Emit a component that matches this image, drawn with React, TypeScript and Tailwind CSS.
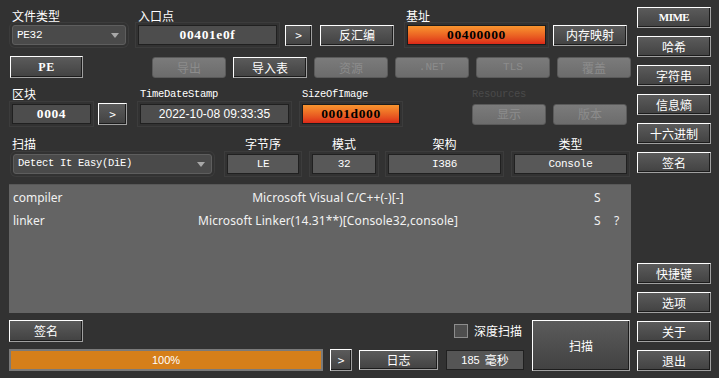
import React from 'react';

const cjk = "font-['Noto_Sans_CJK_SC',sans-serif]";
const mono = "font-['Liberation_Mono','Noto_Sans_CJK_SC',monospace]";
const bold = "font-['Liberation_Serif',serif] font-bold text-[13.5px] tracking-[0.6px]";

type Kids = { children?: React.ReactNode; className?: string };

const Label: React.FC<Kids> = ({ children, className = '' }) => (
  <div className={`text-[12px] leading-[16px] text-white ${cjk} ${className}`}>{children}</div>
);

const MonoLabel: React.FC<Kids> = ({ children, className = '' }) => (
  <div className={`h-[19px] pt-[1px] text-[10.5px] leading-[16px] tracking-[-0.3px] ${mono} ${className}`}>{children}</div>
);

const Btn: React.FC<Kids> = ({ children, className = '' }) => (
  <div
    className={`flex items-center justify-center border border-t-white border-l-white border-r-[#a0a0a0] border-b-[#a0a0a0] bg-linear-to-b from-[#5b5b5b] to-[#424242] text-white shadow-[inset_-1px_-1px_0_#1c1c1c] ${className}`}
  >
    {children}
  </div>
);

const CBtn: React.FC<Kids> = ({ children, className = '' }) => (
  <Btn className={`text-[12px] ${cjk} ${className}`}>{children}</Btn>
);

const DisBtn: React.FC<Kids> = ({ children, className = '' }) => (
  <div
    className={`flex items-center justify-center rounded-[3px] border border-[#5a5a5a] bg-linear-to-b from-[#7b7b7b] to-[#6c6c6c] text-[#8c8c8c] ${className}`}
  >
    {children}
  </div>
);

const Field: React.FC<Kids> = ({ children, className = '' }) => (
  <div
    className={`flex items-center justify-center border border-[#202020] bg-[#4d4d4d] text-white shadow-[0_0_0_2px_#323232,0_0_0_3px_#3c3c3c] ${className}`}
  >
    {children}
  </div>
);

const HotField: React.FC<Kids> = ({ children, className = '' }) => (
  <div
    className={`flex items-center justify-center border border-[#1c1c1c] bg-linear-to-b from-[#f8942f] to-[#dc2719] text-black shadow-[0_0_0_2px_#323232,0_0_0_3px_#3c3c3c] ${bold} ${className}`}
  >
    {children}
  </div>
);

const Combo: React.FC<Kids> = ({ children, className = '' }) => (
  <div
    className={`flex items-center justify-between rounded-[3px] border border-[#5e5e5e] bg-[#4a4a4a] pl-[4px] pr-[6px] tracking-[-0.3px] text-white shadow-[0_0_0_2px_#323232,0_0_0_3px_#3c3c3c] ${mono} ${className}`}
  >
    <span>{children}</span>
    <svg width="8" height="5" viewBox="0 0 8 5">
      <path d="M0 0h8L4 5z" fill="#a8a8a8" />
    </svg>
  </div>
);

const results = [
  { name: 'compiler', value: 'Microsoft Visual C/C++(-)[-]', s: 'S', q: '' },
  { name: 'linker', value: 'Microsoft Linker(14.31**)[Console32,console]', s: 'S', q: '?' },
];

export default function App() {
  return (
    <div className="flex h-[378px] w-[719px] overflow-hidden bg-[#323232] select-none">
      <div className="flex w-[632px] flex-col pt-[8px]">
        {/* row 1 */}
        <div className="flex h-[37px]">
          <div className="ml-[12px] w-[114px]">
            <Label className="h-[17px]">文件类型</Label>
            <Combo className="h-[20px] text-[11px]">PE32</Combo>
          </div>
          <div className="ml-[12px]">
            <Label className="h-[17px]">入口点</Label>
            <div className="flex h-[20px] items-center">
              <Field className={`h-[20px] w-[139px] ${bold}`}>00401e0f</Field>
              <CBtn className="ml-[8px] h-[21px] w-[27px]">&gt;</CBtn>
              <CBtn className="ml-[8px] h-[21px] w-[74px]">反汇编</CBtn>
            </div>
          </div>
          <div className="ml-[12px]">
            <Label className="h-[17px]">基址</Label>
            <div className="flex h-[20px] items-center">
              <HotField className="ml-[1px] h-[20px] w-[139px]">00400000</HotField>
              <CBtn className="ml-[7px] h-[21px] w-[74px]">内存映射</CBtn>
            </div>
          </div>
        </div>

        {/* row 2 */}
        <div className="mt-[11px] flex h-[22px] items-start">
          <Btn className="ml-[10px] h-[22px] w-[73px] font-['Liberation_Serif',serif] text-[12px] font-bold tracking-[0.5px]">PE</Btn>
          <div className="ml-[69px] mt-[1px] flex gap-[7px]">
            <DisBtn className={`h-[21px] w-[74px] text-[12px] ${cjk}`}>导出</DisBtn>
            <CBtn className="h-[21px] w-[74px]">导入表</CBtn>
            <DisBtn className={`h-[21px] w-[74px] text-[12px] ${cjk}`}>资源</DisBtn>
            <DisBtn className={`h-[21px] w-[74px] text-[11px] ${mono}`}>.NET</DisBtn>
            <DisBtn className={`h-[21px] w-[74px] text-[11px] ${mono}`}>TLS</DisBtn>
            <DisBtn className={`h-[21px] w-[74px] text-[12px] ${cjk}`}>覆盖</DisBtn>
          </div>
        </div>

        {/* row 3 */}
        <div className="mt-[7px] flex h-[39px]">
          <div className="ml-[12px]">
            <Label className="h-[19px] pt-[1px]">区块</Label>
            <div className="flex h-[20px] items-center">
              <Field className={`h-[20px] w-[79px] ${bold}`}>0004</Field>
              <CBtn className="ml-[7px] h-[22px] w-[29px]">&gt;</CBtn>
            </div>
          </div>
          <div className="ml-[13px]">
            <MonoLabel className="text-white">TimeDateStamp</MonoLabel>
            <Field className="h-[20px] w-[149px] font-['Liberation_Sans',sans-serif] text-[12px]">2022-10-08 09:33:35</Field>
          </div>
          <div className="ml-[13px]">
            <MonoLabel className="text-white">SizeOfImage</MonoLabel>
            <HotField className="h-[20px] w-[98px]">0001d000</HotField>
          </div>
          <div className="ml-[72px]">
            <MonoLabel className="text-[#4a4a4a]">Resources</MonoLabel>
            <div className="flex h-[20px] items-center gap-[7px]">
              <DisBtn className={`h-[21px] w-[74px] text-[12px] ${cjk}`}>显示</DisBtn>
              <DisBtn className={`h-[21px] w-[74px] text-[12px] ${cjk}`}>版本</DisBtn>
            </div>
          </div>
        </div>

        {/* row 4 */}
        <div className="mt-[11px] flex h-[39px]">
          <div className="ml-[13px] w-[199px]">
            <Label className="-ml-[1px] h-[19px] pt-[1px]">扫描</Label>
            <Combo className="h-[20px] text-[10.5px]">Detect It Easy(DiE)</Combo>
          </div>
          {[
            ['字节序', 'LE', 'ml-[15px] w-[72px]'],
            ['模式', '32', 'ml-[13px] w-[64px]'],
            ['架构', 'I386', 'ml-[12px] w-[113px]'],
            ['类型', 'Console', 'ml-[13px] w-[113px]'],
          ].map(([label, value, cls]) => (
            <div key={label} className={cls}>
              <Label className="h-[19px] pt-[1px] text-center">{label}</Label>
              <Field className={`h-[20px] w-full bg-[#585858] text-[11px] tracking-[-0.3px] ${mono}`}>{value}</Field>
            </div>
          ))}
        </div>

        {/* results */}
        <div className="ml-[9px] mt-[10px] h-[129px] w-[622px] border-t border-[#585858] bg-[#646464] pt-[1px] font-['Noto_Sans',sans-serif] text-[12px] text-[#f2f2f2]">
          {results.map((r) => (
            <div key={r.name} className="flex h-[23px] items-center pl-[4px]">
              <div className="w-[100px]">{r.name}</div>
              <div className="w-[430px] text-center tracking-[0.1px]">{r.value}</div>
              <div className="ml-[51px] w-[20px]">{r.s}</div>
              <div className="w-[17px]">{r.q}</div>
            </div>
          ))}
        </div>

        {/* bottom */}
        <div className="ml-[9px] mt-[7px] flex">
          <div className="flex w-[515px] flex-col">
            <div className="flex h-[22px] items-center justify-between">
              <CBtn className="h-[22px] w-[74px]">签名</CBtn>
              <div className="mr-[2px] flex items-center">
                <div className="h-[14px] w-[14px] border border-[#8c8c8c] bg-[#4e4e4e]" />
                <span className={`ml-[6px] text-[12px] text-white ${cjk}`}>深度扫描</span>
              </div>
            </div>
            <div className="mt-[7px] flex items-center">
              <div className="flex h-[22px] w-[314px] border-[2px] border-[#7a7a7a] bg-[#d57f1a]">
                <span className="m-auto font-['Liberation_Sans',sans-serif] text-[11px] text-white">100%</span>
              </div>
              <CBtn className="ml-[7px] h-[22px] w-[22px]">&gt;</CBtn>
              <CBtn className="ml-[7px] h-[20px] w-[79px]">日志</CBtn>
              <div className={`ml-[8px] flex h-[20px] w-[78px] items-center justify-center border border-[#202020] bg-[#555555] text-[12px] text-white ${cjk}`}>
                <span className="font-['Liberation_Sans',sans-serif] text-[11px]">185</span>
                <span className="ml-[5px]">毫秒</span>
              </div>
            </div>
          </div>
          <CBtn className="ml-[8px] h-[51px] w-[98px]">扫描</CBtn>
        </div>
      </div>

      {/* right column */}
      <div className="ml-[5px] flex w-[74px] flex-col pt-[7px] pb-[7px]">
        <div className="flex flex-col gap-[8px]">
          <Btn className="h-[21px] font-['Liberation_Serif',serif] text-[11px] font-bold tracking-[-0.5px]">MIME</Btn>
          <CBtn className="h-[21px]">哈希</CBtn>
          <CBtn className="h-[21px]">字符串</CBtn>
          <CBtn className="h-[21px]">信息熵</CBtn>
          <CBtn className="h-[21px]">十六进制</CBtn>
          <CBtn className="h-[21px]">签名</CBtn>
        </div>
        <div className="mt-auto flex flex-col gap-[8px]">
          <CBtn className="h-[21px]">快捷键</CBtn>
          <CBtn className="h-[21px]">选项</CBtn>
          <CBtn className="h-[21px]">关于</CBtn>
          <CBtn className="h-[21px]">退出</CBtn>
        </div>
      </div>
    </div>
  );
}
